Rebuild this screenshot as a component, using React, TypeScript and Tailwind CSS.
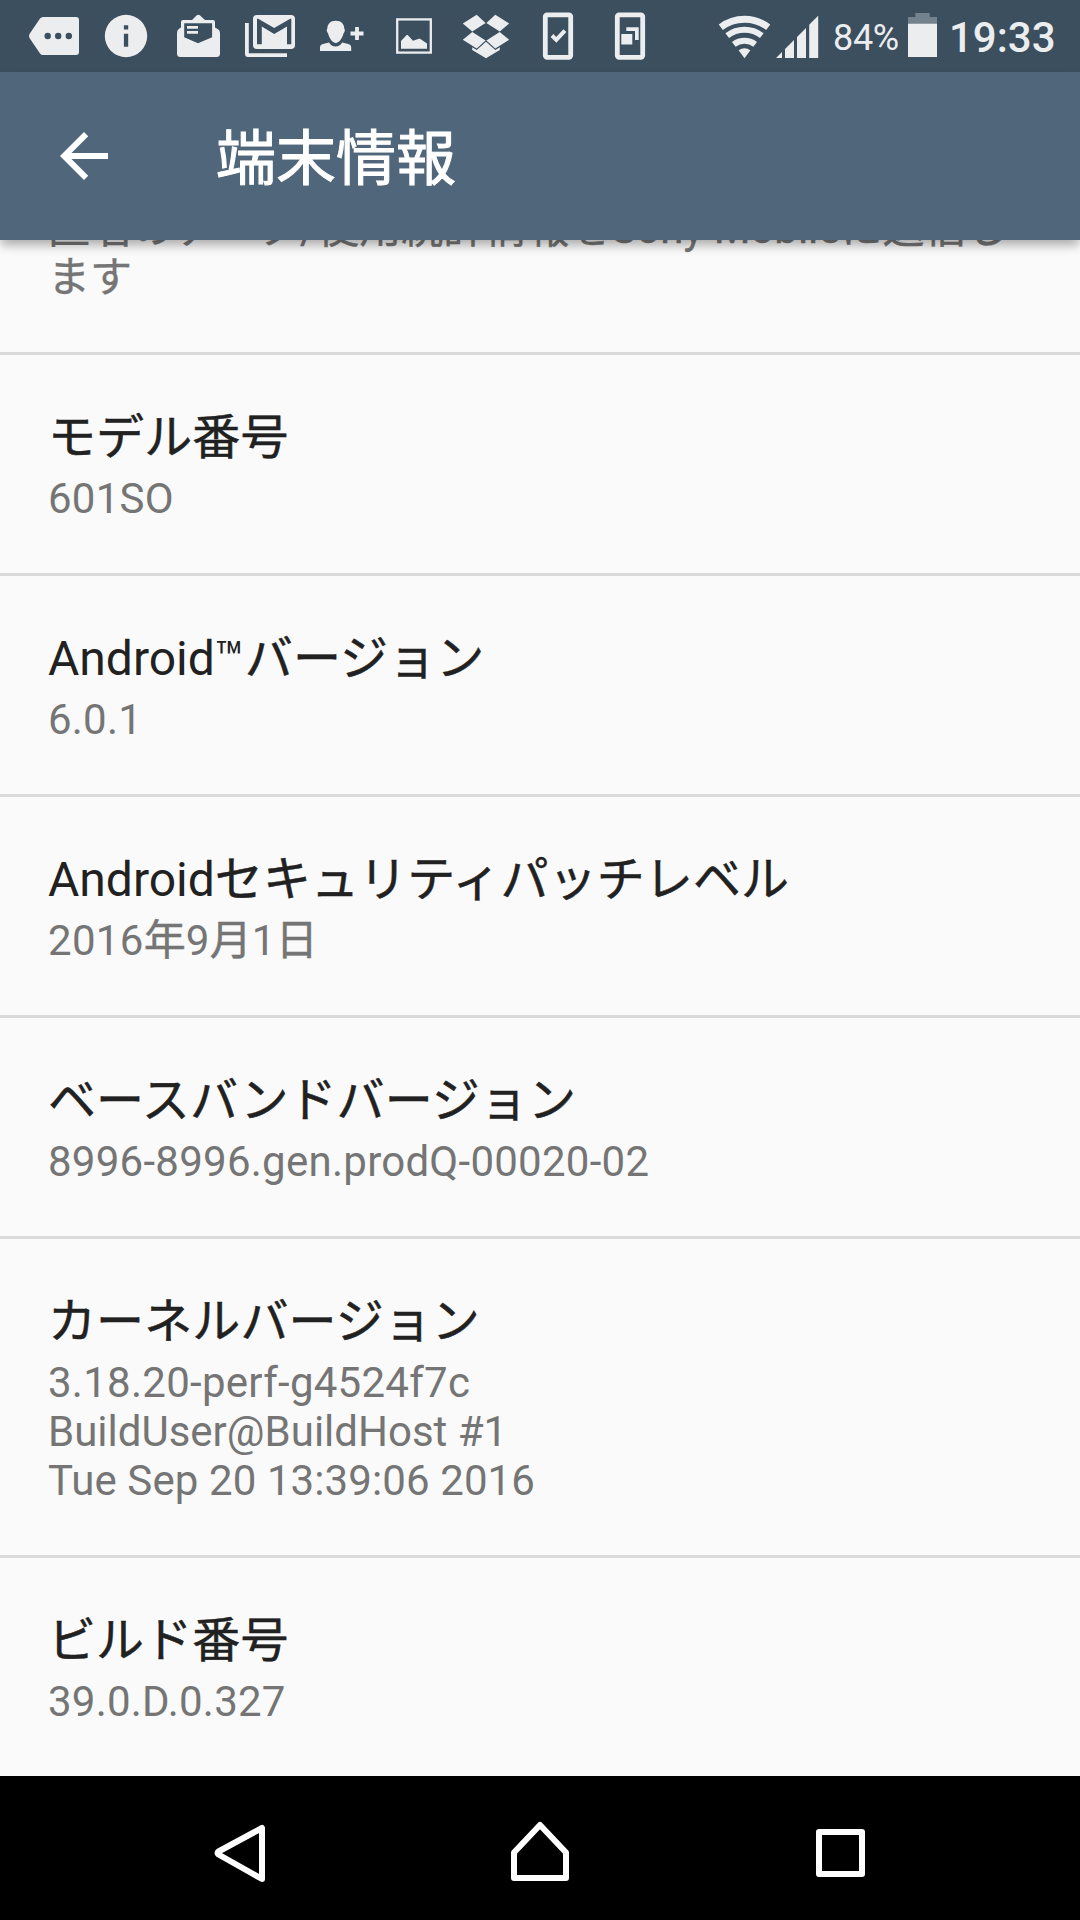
import type { ReactNode } from 'react';

interface InfoLine {
  text: string;
  className?: string;
}

interface InfoItem {
  title: string;
  lines: InfoLine[];
}

const items: InfoItem[] = [
  { title: 'モデル番号', lines: [{ text: '601SO', className: 'tracking-[0.25px]' }] },
  { title: 'Android™バージョン', lines: [{ text: '6.0.1', className: 'tracking-[0.2px]' }] },
  { title: 'Androidセキュリティパッチレベル', lines: [{ text: '2016年9月1日', className: 'tracking-[0.3px]' }] },
  { title: 'ベースバンドバージョン', lines: [{ text: '8996-8996.gen.prodQ-00020-02', className: 'tracking-[0.26px]' }] },
  {
    title: 'カーネルバージョン',
    lines: [
      { text: '3.18.20-perf-g4524f7c', className: 'tracking-[0.27px]' },
      { text: 'BuildUser@BuildHost #1' },
      { text: 'Tue Sep 20 13:39:06 2016', className: 'tracking-[0.1px]' },
    ],
  },
  { title: 'ビルド番号', lines: [{ text: '39.0.D.0.327', className: 'tracking-[0.22px]' }] },
];

// Japanese runs are a touch heavier than the Latin ones
function MixedText({ text }: { text: string }) {
  return (
    <>
      {text.split(/([\u3000-\u9fff]+)/).map((part, i) =>
        i % 2 ? <span key={i} className="tracking-[0.1px] [-webkit-text-stroke:0.5px_currentColor]">{part}</span> : part
      )}
    </>
  );
}

function StatusIcon({ children }: { children: ReactNode }) {
  return (
    <svg className="size-[72px] shrink-0 fill-[#ebedef]" viewBox="0 0 72 72">
      {children}
    </svg>
  );
}

function NotificationIcons() {
  return (
    <div className="flex">
      {/* More notifications */}
      <StatusIcon>
        <path d="M25 17H58q3 0 3 3V52q0 3-3 3H25q-1.8 0-3-1.6L11.5 38q-1-2 0-4L22 18.6q1.2-1.6 3-1.6z" />
        <g className="fill-[#3c4f5e]">
          <circle cx="29.7" cy="36" r="3.2" />
          <circle cx="40.2" cy="36" r="3.2" />
          <circle cx="50.8" cy="36" r="3.2" />
        </g>
      </StatusIcon>
      {/* Info */}
      <StatusIcon>
        <circle cx="36" cy="36" r="21.2" />
        <path className="fill-[#3c4f5e]" d="M33.9 25.2h4.3v4.2h-4.3zM33.9 33.8h4.3v12.9h-4.3z" />
      </StatusIcon>
      {/* Open mail */}
      <StatusIcon>
        <path d="M15 33q0-3 2-4.2l2-1.3V22q0-2 2-2H30l4.5-4.5q1.8-1.5 3.6 0L43 20h8q2 0 2 2v5.5l3 1.8q2 1.2 2 3.7v20.5q0 3.5-3.5 3.5h-36q-3.5 0-3.5-3.5z" />
        <path className="fill-[#3c4f5e]" d="M22.2 23.3h27.9v14L36 43.2l-13.8-5.9z" />
        <path d="M25 26h11v2.8H25zM25 31h11v2.8H25z" />
      </StatusIcon>
      {/* Gmail stack */}
      <StatusIcon>
        <path d="M11 23h3.8v30.2H53V57H14q-3 0-3-3z" />
        <rect x="19" y="15" width="42" height="34" rx="4" />
        <path className="fill-[#3c4f5e]" d="M23 44.2V18.7h1.2L40.2 28l16-9.3h1.1v25.5H53V26.4L40.2 34 27.8 26.4v17.8z" />
      </StatusIcon>
      {/* Add contact */}
      <StatusIcon>
        <path d="M29.8 20.7c5.6 0 8.4 3.6 8.4 7.6 1 1 .8 3.6-.7 5.2-1.2 4.6-4.3 9.4-7.7 9.4s-6.5-4.8-7.7-9.4c-1.5-1.6-1.7-4.2-.7-5.2 0-4 2.8-7.6 8.4-7.6z" />
        <path d="M14 51v-3.4q0-2.8 3-3.6l6-1.6q2.3 4 6.6 4t6.6-4l6 1.6q3 .8 3 3.6V51z" />
        <path d="M49.1 27h3.8v4.6h4.6v3.8h-4.6V40h-3.8v-4.6h-4.6v-3.8h4.6z" />
      </StatusIcon>
      {/* Picture */}
      <StatusIcon>
        <rect className="fill-none stroke-[#ebedef]" x="19.2" y="19.4" width="33.6" height="33.2" strokeWidth="2.3" />
        <path d="M23 48.7V41l5.7-6h1l5.3 5.8 6-2.1h1l7 4.8v5.2z" />
      </StatusIcon>
      {/* Dropbox */}
      <StatusIcon>
        <polygon points="12.8,23.5 26.7,14.8 35.6,22.9 22.3,31.4" />
        <polygon points="59.2,23.5 45.3,14.8 36.4,22.9 49.7,31.4" />
        <polygon points="22.3,32 35.6,40.4 26.7,48.5 12.8,39.7" />
        <polygon points="49.7,32 36.4,40.4 45.3,48.5 59.2,39.7" />
        <polygon points="36,41.8 45.3,49.9 49.8,47.3 49.8,50 36,58.3 22.2,50 22.2,47.3 26.7,49.9" />
      </StatusIcon>
      {/* Device check */}
      <StatusIcon>
        <rect className="fill-none stroke-[#ebedef]" x="23.3" y="14.8" width="25.4" height="42.6" rx="1.8" strokeWidth="4.8" />
        <path className="fill-none stroke-[#ebedef]" d="M30 35.5l4.3 4.3 8.6-9.2" strokeWidth="4" />
      </StatusIcon>
      {/* Small app window */}
      <StatusIcon>
        <rect className="fill-none stroke-[#ebedef]" x="23.3" y="14.8" width="25.4" height="42.6" rx="1.8" strokeWidth="4.8" />
        <path d="M27.3 34h11v10.4h-11zM32.3 27.3h12.4V40H41v-9h-8.7z" />
      </StatusIcon>
    </div>
  );
}

function StatusBar() {
  return (
    <div className="flex h-[72px] shrink-0 bg-[#3c4f5e] pl-[18px] text-[#ebedef]">
      <NotificationIcons />
      <svg className="ml-[52px] h-[72px] w-[54px] shrink-0 fill-[#ebedef]" viewBox="0 0 54 72">
        <g className="fill-none stroke-[#ebedef]">
          <path d="M2.8 27.2A39.3 39.3 0 0 1 50.2 27.2" strokeWidth="6.8" />
          <path d="M9.2 35.6A28.7 28.7 0 0 1 43.8 35.6" strokeWidth="6" />
          <path d="M15.8 44.3A17.7 17.7 0 0 1 37.2 44.3" strokeWidth="6" />
        </g>
        <path d="M26.5 58.3L20.6 50.3A10.3 10.3 0 0 1 32.4 50.3z" />
      </svg>
      <svg className="h-[72px] w-[50px] shrink-0 fill-[#ebedef]" viewBox="0 0 50 72">
        <path d="M4 58l6-6v6zM13 49l9-9v18h-9zM25 37l9-9v30h-9zM37.2 24.8l9-9V58h-9z" />
      </svg>
      <span className="ml-[11px] mt-[17px] w-[75px] text-[36px] leading-[42px] tracking-[-0.3px]">84%</span>
      <svg className="h-[72px] w-[29px] shrink-0 fill-[#ebedef]" viewBox="0 0 29 72">
        <path className="fill-[#74828d]" d="M7.3 13h14.4v4H29v7H0v-7h7.3z" />
        <path d="M0 23.7h29V57H0z" />
      </svg>
      <span className="ml-3 mt-[13px] text-[42px] leading-[49px] font-medium">19:33</span>
    </div>
  );
}

function ListItem({ title, lines }: InfoItem) {
  return (
    <li className="border-t-[3px] border-[#dadada] px-12 pt-[55px] pb-[50px]">
      <h2 className="text-[48px] leading-[56px] text-[#212121]">
        <MixedText text={title} />
      </h2>
      <div className="mt-2 text-[42px] leading-[49px] text-[#757575]">
        {lines.map((line) => (
          <p key={line.text} className={line.className}>
            <MixedText text={line.text} />
          </p>
        ))}
      </div>
    </li>
  );
}

function NavBar() {
  return (
    <nav className="grid h-[144px] shrink-0 grid-cols-3 bg-black px-[90px]">
      {[
        'M62 52V103L18.5 78.5Q16.5 77 18.5 75.5z',
        'M40 49L66 76.5V102H14V76.5z',
        'M19 56h43v42H19z',
      ].map((d) => (
        <button key={d} type="button" className="flex justify-center">
          <svg className="h-[144px] w-20 fill-none stroke-white" viewBox="0 0 80 144" strokeWidth="6" strokeLinejoin="round">
            <path d={d} />
          </svg>
        </button>
      ))}
    </nav>
  );
}

export default function App() {
  return (
    <div className="flex h-[1920px] w-[1080px] flex-col overflow-hidden bg-[#fafafa] font-['Roboto','Noto_Sans_CJK_JP',sans-serif]">
      <StatusBar />
      <header className="relative z-10 flex h-[168px] shrink-0 items-center bg-[#50667a] pl-12 text-white shadow-[0_6px_10px_-1px_rgba(0,0,0,0.32)]">
        <svg className="size-[72px] fill-white" viewBox="0 0 24 24">
          <path d="M20 11H7.83l5.59-5.59L12 4l-8 8 8 8 1.41-1.41L7.83 13H20v-2z" />
        </svg>
        <h1 className="ml-24 pt-2 text-[60px] leading-[70px] [-webkit-text-stroke:1px_currentColor]">端末情報</h1>
      </header>
      <main className="flex min-h-0 flex-1 flex-col justify-end overflow-hidden">
        <p className="px-12 pb-[50px] text-[42px] leading-[49px] text-[#757575] [-webkit-text-stroke:0.4px_currentColor]">
          匿名のデータ/使用統計情報をSony Mobileに送信します
        </p>
        <ul>
          {items.map((item) => (
            <ListItem key={item.title} {...item} />
          ))}
        </ul>
      </main>
      <NavBar />
    </div>
  );
}
